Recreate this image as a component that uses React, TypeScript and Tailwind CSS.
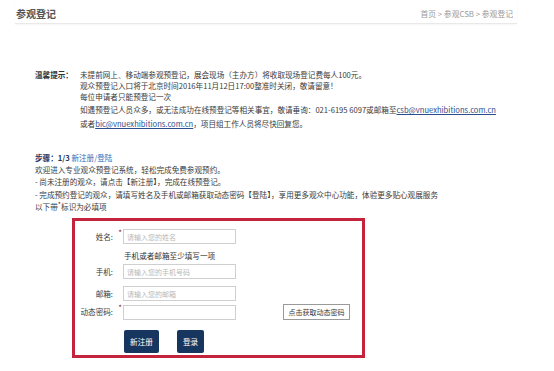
import React from "react";

const Req = () => (
  <span className="absolute right-[-9px] top-[-2px] text-[8px] leading-none text-[#8b1a1a]">*</span>
);

export default function App() {
  return (
    <div className="w-[554px] h-[371px] overflow-hidden bg-white text-[#3a3a3a] font-['Noto_Sans_CJK_SC','Microsoft_YaHei',sans-serif]">
      {/* header */}
      <div className="ml-[15px] w-[502px] h-[24px] flex items-center justify-between border-b border-[#e9e9e9] shadow-[0_1px_2px_rgba(0,0,0,0.04)] pl-[1px] pr-[4px] pt-[4px]">
        <span className="text-[10px] font-semibold text-[#555] leading-none">参观登记</span>
        <span className="text-[7.8px] text-[#9a9a9a] leading-none">首页 &gt; 参观CSB &gt; 参观登记</span>
      </div>

      {/* warm tips */}
      <div className="mt-[45px] ml-[35px] flex text-[7.6px]">
        <div className="w-[45px] h-[11px] leading-[11px] font-bold text-[#333]">温馨提示：</div>
        <div className="flex flex-col">
          <div className="h-[11px] leading-[11px]">未提前网上、移动端参观预登记，展会现场（主办方）将收取现场登记费每人100元。</div>
          <div className="h-[11px] leading-[11px]">观众预登记入口将于北京时间2016年11月12日17:00整准时关闭，敬请留意！</div>
          <div className="h-[12px] leading-[12px]">每位申请者只能预登记一次</div>
          <div className="h-[14px] leading-[14px]">
            如遇预登记人员众多，或无法成功在线预登记等相关事宜，敬请垂询：021-6195 6097或邮箱至
            <span className="text-[#2b4d8c] underline">csb@vnuexhibitions.com.cn</span>
          </div>
          <div className="h-[14px] leading-[14px]">
            或者<span className="text-[#2b4d8c] underline">bic@vnuexhibitions.com.cn</span>，项目组工作人员将尽快回复您。
          </div>
        </div>
      </div>

      {/* steps */}
      <div className="mt-[20px] ml-[35px] flex flex-col text-[7.6px]">
        <div className="h-[13px] leading-[13px]">
          <span className="font-bold text-[#1c3866]">步骤：1/3 </span>
          <span className="text-[#3a68b0]">新注册/登陆</span>
        </div>
        <div className="h-[12px] leading-[12px]">欢迎进入专业观众预登记系统，轻松完成免费参观预约。</div>
        <div className="h-[12px] leading-[12px]">- 尚未注册的观众，请点击【新注册】，完成在线预登记。</div>
        <div className="h-[13px] leading-[13px]">- 完成预约登记的观众，请填写姓名及手机或邮箱获取动态密码【登陆】，享用更多观众中心功能，体验更多贴心观展服务</div>
        <div className="h-[12px] leading-[12px]">
          以下带<span className="relative top-[-3px] text-[7px] text-[#8b1a1a]">*</span>标识为必填项
        </div>
      </div>

      {/* form box */}
      <div className="mt-[5px] ml-[72px] w-[293px] h-[140px] border-[3px] border-[#c3243b] flex flex-col text-[7.6px]">
        <div className="mt-[8px] flex items-center h-[15px]">
          <div className="relative w-[38px] text-right">姓名:<Req /></div>
          <input
            className="ml-[10px] w-[113px] h-[15px] border border-[#cfcfcf] px-[3px] text-[7px] placeholder:text-[#b8b8b8] outline-none"
            placeholder="请输入您的姓名"
          />
        </div>
        <div className="mt-[7px] h-[10px] leading-[10px] ml-[49px] text-[#333]">手机或者邮箱至少填写一项</div>
        <div className="mt-[3px] flex items-center h-[15px]">
          <div className="w-[38px] text-right">手机:</div>
          <input
            className="ml-[10px] w-[113px] h-[15px] border border-[#cfcfcf] px-[3px] text-[7px] placeholder:text-[#b8b8b8] outline-none"
            placeholder="请输入您的手机号码"
          />
        </div>
        <div className="mt-[7px] flex items-center h-[15px]">
          <div className="w-[38px] text-right">邮箱:</div>
          <input
            className="ml-[10px] w-[113px] h-[15px] border border-[#cfcfcf] px-[3px] text-[7px] placeholder:text-[#b8b8b8] outline-none"
            placeholder="请输入您的邮箱"
          />
        </div>
        <div className="mt-[3px] flex items-center h-[16px]">
          <div className="relative w-[38px] text-right">动态密码:<Req /></div>
          <input className="ml-[10px] w-[113px] h-[15px] border border-[#cfcfcf] outline-none" />
          <button className="ml-[47px] w-[67px] h-[16px] border border-[#9a9a9a] bg-white text-[7px] text-[#333] leading-none">
            点击获取动态密码
          </button>
        </div>
        <div className="mt-[10px] ml-[49px] flex gap-[18px]">
          <button className="w-[35px] h-[23px] rounded-[2px] bg-[#17365f] text-white text-[7.6px]">新注册</button>
          <button className="w-[27px] h-[23px] rounded-[2px] bg-[#17365f] text-white text-[7.6px]">登录</button>
        </div>
      </div>
    </div>
  );
}
